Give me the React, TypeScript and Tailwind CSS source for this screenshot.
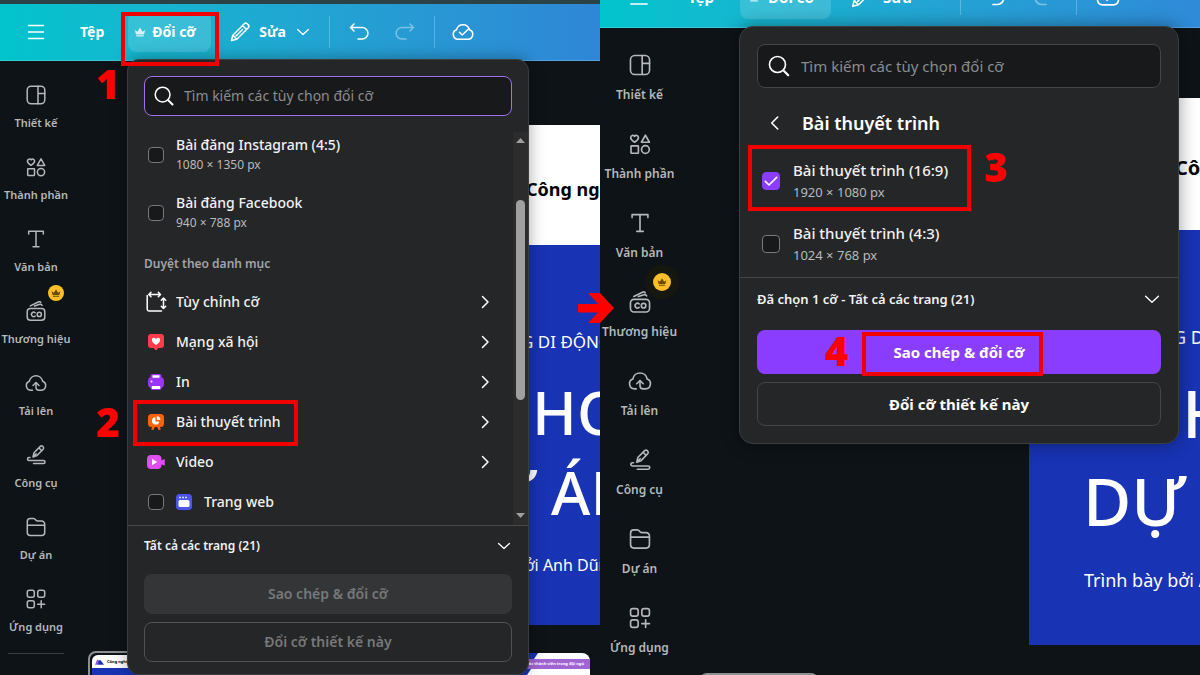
import type { ReactNode } from "react";

type Size = "sm" | "lg";

function Svg({ className, children, width = 1.5 }: { className: string; children: ReactNode; width?: number }) {
  return (
    <svg
      viewBox="0 0 24 24"
      className={className}
      fill="none"
      stroke="currentColor"
      strokeWidth={width}
      strokeLinecap="round"
      strokeLinejoin="round"
      aria-hidden="true"
    >
      {children}
    </svg>
  );
}

const CROWN = "M1.500 8l5.500 3.500L12 3l5 8.500L22.500 8 20 17H4zM4.500 18.500h15V21h-15z";

const navItems: { label: string; icon: ReactNode; pro?: boolean }[] = [
  {
    label: "Thiết kế",
    icon: (
      <>
        <rect x="3.2" y="3.2" width="17.600" height="17.600" rx="4" />
        <path d="M14 3.200v17.600M14 10.500h6.800" />
      </>
    ),
  },
  {
    label: "Thành phần",
    icon: (
      <>
        <path d="M7 10.400C4.600 8.900 3.400 7.600 3.400 6A2 2 0 0 1 7 4.900 2 2 0 0 1 10.600 6c0 1.600-1.200 2.900-3.600 4.400z" />
        <path d="M17 3.900l3.700 6.500h-7.400z" />
        <rect x="3.700" y="13.700" width="6.800" height="6.800" rx=".4" />
        <circle cx="17" cy="17.100" r="3.600" />
      </>
    ),
  },
  {
    label: "Văn bản",
    icon: <path d="M4.700 7V4.300h14.600V7M12 4.300v15.400M9 19.700h6" />,
  },
  {
    label: "Thương hiệu",
    pro: true,
    icon: (
      <>
        <rect x="3.200" y="9.600" width="17.600" height="11.600" rx="3.200" />
        <path d="M6.300 6.900l8.500-4.100c.9-.4 1.700 0 2 .7M10.500 7l5.200-1.700c1-.3 1.900.1 2.400 1.100" />
        <path d="M11.200 13.800a2.200 2.200 0 1 0 0 3.200" />
        <circle cx="15.300" cy="15.400" r="2.100" />
      </>
    ),
  },
  {
    label: "Tải lên",
    icon: (
      <>
        <path d="M8.500 19.300H7A4.700 4.700 0 0 1 5.400 10.200 6.700 6.700 0 0 1 18.600 10.200 4.700 4.700 0 0 1 17 19.300h-2c-2 0-3-1-3-3V12" />
        <path d="M9 14.500l3-3 3 3" />
      </>
    ),
  },
  {
    label: "Công cụ",
    icon: (
      <>
        <path d="M9 14l1-4.300 6.300-6.300a1.700 1.700 0 0 1 2.400 0l.4.400a1.700 1.700 0 0 1 0 2.400L13 12.600zM15 5l2.800 2.800M9 14l3.200-3.200" />
        <path d="M6 14.500H5a1.500 1.500 0 0 0 0 3h14.500a1.300 1.300 0 0 1 0 3H9.500" />
      </>
    ),
  },
  {
    label: "Dự án",
    icon: (
      <path d="M3.300 10.300h17.400M3.300 6.600a3 3 0 0 1 3-3h3.300c1.900 0 2 2.500 4 2.500h4.100a3 3 0 0 1 3 3v8.300a3 3 0 0 1-3 3H6.300a3 3 0 0 1-3-3z" />
    ),
  },
  {
    label: "Ứng dụng",
    icon: (
      <>
        <rect x="3.300" y="3.300" width="7" height="7" rx="2" />
        <rect x="13.700" y="3.300" width="7" height="7" rx="2" />
        <rect x="3.300" y="13.700" width="7" height="7" rx="2" />
        <path d="M17.200 13.700v7M13.700 17.200h7" />
      </>
    ),
  },
];

function Sidebar({ size }: { size: Size }) {
  const lg = size === "lg";
  return (
    <nav className={lg ? "w-[79px] shrink-0 pt-4" : "w-[72px] shrink-0 pt-[14px]"}>
      <ul>
        {navItems.map((item) => (
          <li key={item.label}>
            <button
              type="button"
              className={
                lg
                  ? "relative flex w-full flex-col items-center gap-2 pt-2 pb-[19px] text-[#b6b8ba]"
                  : "relative flex w-full flex-col items-center gap-2 pt-2 pb-4 text-[#b6b8ba]"
              }
            >
              <Svg className={lg ? "size-[26px]" : "size-6"}>{item.icon}</Svg>
              <span
                className={
                  lg
                    ? "text-[12px] leading-[18px] font-semibold whitespace-nowrap"
                    : "text-[11px] leading-4 font-semibold whitespace-nowrap"
                }
              >
                {item.label}
              </span>
              {item.pro && (
                <span
                  className={
                    lg
                      ? "absolute -top-2 right-2 grid size-[18px] place-items-center rounded-full bg-[#fbbe28] text-[#6b4a00] shadow-[0_0_0_8px_#16170f]"
                      : "absolute -top-[6px] right-2 grid size-4 place-items-center rounded-full bg-[#fbbe28] text-[#6b4a00]"
                  }
                >
                  <svg viewBox="0 0 24 24" className="size-[10px]" fill="currentColor" aria-hidden="true">
                    <path d={CROWN} />
                  </svg>
                </span>
              )}
            </button>
          </li>
        ))}
      </ul>
      {!lg && <hr className="mx-2 mt-[2px] border-[#3a3e42]" />}
    </nav>
  );
}

function Header({ size }: { size: Size }) {
  const lg = size === "lg";
  const text = lg ? "text-[15px] font-bold" : "text-[14px] font-bold";
  const icon = lg ? "size-[26px] shrink-0" : "size-6 shrink-0";
  return (
    <header
      className={
        lg
          ? "-mt-[34px] flex h-[62px] shrink-0 items-center border-b border-white/20 bg-linear-to-r from-[#00c4cc] to-[#2f8ad8] pl-[26px] text-white"
          : "flex h-[57px] shrink-0 items-center border-b border-white/20 bg-linear-to-r from-[#00c4cc] to-[#2f86d6] pl-6 text-white"
      }
    >
      <button type="button" aria-label="Menu">
        <Svg className={icon}>
          <path d="M4.500 5.500h15M4.500 12h15M4.500 18.500h15" />
        </Svg>
      </button>
      <button type="button" className={`${text} ${lg ? "ml-9" : "ml-8"}`}>
        Tệp
      </button>
      <button
        type="button"
        className={`${text} flex items-center rounded-lg bg-white/15 ${
          lg ? "ml-[26px] h-11 w-[91px] gap-2 pl-2" : "ml-6 h-10 w-[83px] gap-[6px] pl-[6px]"
        }`}
      >
        <svg viewBox="0 0 24 24" className="size-3 shrink-0 opacity-80" fill="currentColor" aria-hidden="true">
          <path d={CROWN} />
        </svg>
        Đổi cỡ
      </button>
      <button type="button" className={`${text} flex items-center ${lg ? "ml-[18px] gap-2" : "ml-[17px] gap-[7px]"}`}>
        <Svg className={icon}>
          <path d="M3.500 20.500l1.300-5.300L16.300 3.700a2 2 0 0 1 2.800 0l1.200 1.200a2 2 0 0 1 0 2.800L8.800 19.200zM14.500 5.500l4 4M5 15.500l3.500 3.500M8 16l6.500-6.500" />
        </Svg>
        Sửa
        <Svg className="size-5 shrink-0">
          <path d="M5.500 9l6.500 6 6.500-6" />
        </Svg>
      </button>
      <span className={`w-px bg-white/25 ${lg ? "ml-5 h-9" : "ml-4 h-8"}`} />
      <button type="button" aria-label="Hoàn tác" className={lg ? "ml-5" : "ml-[17px]"}>
        <Svg className={icon}>
          <path d="M7 4L3.500 7.500 7 11M3.500 7.500h11.700a5.700 5.700 0 0 1 0 11.400H11" />
        </Svg>
      </button>
      <button type="button" aria-label="Làm lại" disabled className={`opacity-40 ${lg ? "ml-[25px]" : "ml-[22px]"}`}>
        <Svg className={icon}>
          <path d="M17 4l3.500 3.500L17 11M20.500 7.500H8.800a5.700 5.700 0 0 0 0 11.400H13" />
        </Svg>
      </button>
      <span className={`w-px bg-white/25 ${lg ? "ml-[18px] h-9" : "ml-[17px] h-8"}`} />
      <button type="button" aria-label="Đã lưu" className={lg ? "ml-[18px]" : "ml-4"}>
        <Svg className={icon}>
          <path d="M7 19.300A4.900 4.900 0 0 1 5.500 9.800a6.700 6.700 0 0 1 13 0A4.900 4.900 0 0 1 17 19.300z" />
          <path d="M8.500 12.300l2.700 2.700 6.300-6" />
        </Svg>
      </button>
    </header>
  );
}

function Slide({ size }: { size: Size }) {
  const lg = size === "lg";
  return (
    <article className={lg ? "ml-[350px] whitespace-nowrap" : "ml-[318px] whitespace-nowrap"}>
      <div
        className={
          lg
            ? "flex h-[132px] items-center bg-white pt-2 pl-[146px] text-[20px] font-bold text-black"
            : "flex h-[120px] items-center bg-white pt-2 pl-[136px] text-[18px] font-bold text-black"
        }
      >
        Công nghệ
      </div>
      <div className={lg ? "h-[415px] bg-[#1833b4] pt-[93px] text-white" : "h-[380px] bg-[#1833b4] pt-[85px] text-white"}>
        <p className={lg ? "pl-[144px] text-[18px] leading-7" : "pl-[131px] text-[17px] leading-6"}>G DI ĐỘNG</p>
        <p
          className={
            lg
              ? "mt-[17px] pl-[153px] text-[66px] leading-[88px] font-medium"
              : "mt-[18px] pl-[142px] text-[60px] leading-[80px] font-medium"
          }
        >
          HOA
        </p>
        <p
          className={
            lg ? "pl-[54px] text-[66px] leading-[88px] font-medium" : "pl-[53px] text-[60px] leading-[80px] font-medium"
          }
        >
          DỰ ÁN
        </p>
        <p className={lg ? "mt-[22px] pl-[55px] text-[18px] leading-7" : "mt-[21px] pl-[51px] text-[16px] leading-6"}>
          Trình bày bởi Anh Dũng
        </p>
      </div>
    </article>
  );
}

function Thumbnails() {
  return (
    <div className="mt-[26px] flex items-start justify-between pr-[10px] pl-4">
      <div className="h-[60px] w-[107px] rounded-lg border-2 border-[#8d9092] p-[2px]">
        <div className="h-full overflow-hidden rounded-md bg-[#1833b4]">
          <div className="flex h-[13px] items-center gap-[3px] bg-white pl-[3px] text-[4px] font-bold text-black">
            <svg viewBox="0 0 16 10" className="h-[6px] w-[9px]" aria-hidden="true">
              <path d="M0 10L4 0l4 6-1 4z" fill="#8b5bd6" />
              <path d="M6 10V2l4 0 6 8z" fill="#1833b4" />
            </svg>
            Công nghệ
          </div>
        </div>
      </div>
      <div className="mt-[2px] h-[60px] w-[107px] overflow-hidden rounded-lg bg-white">
        <div className="flex h-[6px] pl-[42px]">
          <svg viewBox="0 0 16 6" className="h-[6px] w-4" aria-hidden="true">
            <path d="M0 0h13L9 6H0z" fill="#1833b4" />
          </svg>
        </div>
        <p className="flex h-[10px] items-center justify-end bg-[#a065d2] pr-[6px] text-[4px] font-bold whitespace-nowrap text-white">
          Các thành viên trong đội ngũ
        </p>
        <svg viewBox="0 0 48 12" className="h-3 w-12" aria-hidden="true">
          <path d="M0 0h48l-8 12H0z" fill="#1833b4" />
        </svg>
      </div>
    </div>
  );
}

function SearchBox({ size, focused }: { size: Size; focused?: boolean }) {
  const lg = size === "lg";
  return (
    <label
      className={`flex items-center rounded-lg border bg-[#18191b] ${
        focused ? "border-[#a070ee]" : "border-[#434547]"
      } ${lg ? "mx-[17px] h-11 gap-[9px] px-2" : "mx-4 h-10 gap-2 px-[7px]"}`}
    >
      <Svg className={lg ? "size-[26px] shrink-0 text-white" : "size-6 shrink-0 text-white"}>
        <circle cx="10.600" cy="10.600" r="7.400" />
        <path d="M16.200 16.200l4.300 4.300" strokeWidth="2" />
      </Svg>
      <input
        type="search"
        aria-label="Tìm kiếm các tùy chọn đổi cỡ"
        placeholder="Tìm kiếm các tùy chọn đổi cỡ"
        className={`h-5 min-w-0 flex-1 bg-transparent text-white outline-none placeholder:text-[#8b8c8e] ${
          lg ? "text-[15px]" : "text-[14px]"
        }`}
      />
    </label>
  );
}

function Checkbox({ id, size, checked }: { id: string; size: Size; checked?: boolean }) {
  return (
    <span className={`grid shrink-0 place-items-center ${size === "lg" ? "w-[26px]" : "w-6"}`}>
      <input
        id={id}
        type="checkbox"
        defaultChecked={checked}
        className={`peer col-start-1 row-start-1 appearance-none rounded-[4px] border border-[#77797c] bg-[#18191b] checked:border-[#8b3dff] checked:bg-[#8b3dff] ${
          size === "lg" ? "size-[18px]" : "size-4"
        }`}
      />
      <Svg
        className="pointer-events-none col-start-1 row-start-1 hidden size-4 text-white peer-checked:block"
        width={2.4}
      >
        <path d="M3.500 12.500l5.500 5.500L20.500 6.500" />
      </Svg>
    </span>
  );
}

function FormatOption({
  id,
  size,
  title,
  dims,
  checked,
}: {
  id: string;
  size: Size;
  title: string;
  dims: string;
  checked?: boolean;
}) {
  const lg = size === "lg";
  return (
    <div className={lg ? "flex items-center gap-[9px]" : "flex items-center gap-2"}>
      <Checkbox id={id} size={size} checked={checked} />
      <label htmlFor={id} className="flex flex-col">
        <span
          className={
            lg
              ? "text-[15px] leading-[22px] font-medium text-[#f2f2f3]"
              : "text-[14px] leading-5 font-medium text-[#f2f2f3]"
          }
        >
          {title}
        </span>
        <span className={lg ? "text-[13px] leading-[22px] text-[#b9babc]" : "text-[12px] leading-5 text-[#b9babc]"}>
          {dims}
        </span>
      </label>
    </div>
  );
}

function WebIcon() {
  return (
    <svg viewBox="0 0 16 16" className="size-4 shrink-0" aria-hidden="true">
      <rect width="16" height="16" rx="3.500" fill="#4b55ea" />
      <path d="M3.200 2.700h1.600v1.600H3.200zM6.200 2.700h1.600v1.600H6.200zM9.200 2.700h1.600v1.600H9.200z" fill="#fff" />
      <rect x="2.500" y="6" width="11" height="7" rx="1.500" fill="#fff" />
    </svg>
  );
}

const categories: { label: string; icon: ReactNode }[] = [
  {
    label: "Tùy chỉnh cỡ",
    icon: (
      <g fill="none" stroke="#fff" strokeWidth="1.500" strokeLinecap="round" strokeLinejoin="round">
        <path d="M3.200 5.500V19a2 2 0 0 0 2 2h12.300" />
        <path d="M5 4.500h11M7 2.300L4.800 4.500 7 6.700M14.300 2.300l2.200 2.200-2.200 2.200" />
        <path d="M19.500 8v10.500M17.300 10.200L19.500 8l2.200 2.200M17.300 16.300l2.200 2.200 2.200-2.200" />
      </g>
    ),
  },
  {
    label: "Mạng xã hội",
    icon: (
      <>
        <path
          d="M7 4h10a3 3 0 0 1 3 3v8a3 3 0 0 1-3 3h-2.500L12 20.500 9.500 18H7a3 3 0 0 1-3-3V7a3 3 0 0 1 3-3z"
          fill="#ff3b4b"
        />
        <path d="M12 15c-2.700-1.700-4-3.100-4-4.700a2 2 0 0 1 4-.9 2 2 0 0 1 4 .9c0 1.600-1.300 3-4 4.700z" fill="#fff" />
      </>
    ),
  },
  {
    label: "In",
    icon: (
      <>
        <rect x="6.500" y="4" width="11" height="6" rx="2" fill="#9b35f5" />
        <rect x="4" y="7" width="16" height="11" rx="4" fill="#9b35f5" />
        <rect x="6.500" y="14" width="11" height="6" rx="2" fill="#9b35f5" />
        <path d="M8.500 5.200h7v2.600h-7zM7.800 16h8.400v3H7.800z" fill="#fff" />
        <circle cx="7.500" cy="11.500" r="1" fill="#fff" />
      </>
    ),
  },
  {
    label: "Bài thuyết trình",
    icon: (
      <>
        <rect x="4" y="4" width="16" height="13" rx="3.500" fill="#ff6105" />
        <path d="M10.500 15l-2.300 4.800M13.500 15l2.300 4.800" stroke="#ff6105" strokeWidth="2.400" />
        <path d="M11.400 7.200a3.700 3.700 0 1 0 3.900 4.300h-3.900z" fill="#fff" />
        <path d="M12.800 6.300v3.800h3.600a3.800 3.800 0 0 0-3.600-3.800z" fill="#fff" />
      </>
    ),
  },
  {
    label: "Video",
    icon: (
      <>
        <rect x="3" y="5" width="14.500" height="14" rx="4" fill="#e04df0" />
        <path d="M16 11l4.800-2v6.500L16 14z" fill="#e04df0" />
        <path d="M8 8.800v6.400l5.200-3.200z" fill="#fff" />
      </>
    ),
  },
];

function ScrollTrack() {
  return (
    <div className="flex w-[15px] shrink-0 flex-col items-center bg-[#2c2c2c]" aria-hidden="true">
      <svg viewBox="0 0 9 5" className="mt-[6px] h-[5px] w-[9px]" fill="#a0a0a0">
        <path d="M4.500 0L9 5H0z" />
      </svg>
      <span className="mt-[57px] h-[200px] w-[9px] rounded-full bg-[#a0a0a0]" />
      <svg viewBox="0 0 9 5" className="mt-auto mb-[7px] h-[5px] w-[9px]" fill="#a0a0a0">
        <path d="M4.500 5L0 0h9z" />
      </svg>
    </div>
  );
}

function ResizeMenu() {
  return (
    <section className="absolute top-[59px] left-[127px] w-[402px] rounded-xl border border-[#3b3d3f] bg-[#252627] pt-4 pb-3 shadow-[0_0_16px_rgba(0,0,0,0.35)]">
      <SearchBox size="sm" focused />
      <div className="mt-4 flex border-b border-[#47494b]">
        <div className="flex-1 pt-[3px] pr-4 pb-[3px] pl-4">
          <div className="flex flex-col gap-[18px]">
            <FormatOption id="ig" size="sm" title="Bài đăng Instagram (4:5)" dims="1080 × 1350 px" />
            <FormatOption id="fb" size="sm" title="Bài đăng Facebook" dims="940 × 788 px" />
          </div>
          <h3 className="mt-[21px] mb-2 text-[12px] leading-5 font-semibold text-[#a3a4a6]">Duyệt theo danh mục</h3>
          {categories.map((c) => (
            <button
              key={c.label}
              type="button"
              className="flex h-10 w-full items-center gap-2 text-left text-[14px] font-medium text-[#f2f2f3]"
            >
              <svg viewBox="0 0 24 24" className="size-6 shrink-0" aria-hidden="true">
                {c.icon}
              </svg>
              <span className="flex-1">{c.label}</span>
              <Svg className="size-6 shrink-0 text-white">
                <path d="M9.500 6.500L15 12l-5.500 5.500" />
              </Svg>
            </button>
          ))}
          <div className="flex h-10 items-center gap-2">
            <Checkbox id="web" size="sm" />
            <label htmlFor="web" className="flex items-center gap-3 text-[14px] font-medium text-[#f2f2f3]">
              <WebIcon />
              Trang web
            </label>
          </div>
        </div>
        <ScrollTrack />
      </div>
      <div className="px-4 pt-[10px]">
        <button
          type="button"
          className="flex w-full items-center justify-between text-[12px] font-semibold text-[#f2f2f3]"
        >
          Tất cả các trang (21)
          <Svg className="-mr-1 h-5 w-6 text-white">
            <path d="M5.500 9l6.500 6 6.500-6" />
          </Svg>
        </button>
        <div className="mt-[18px] flex flex-col gap-2 text-[14px] font-semibold text-[#77787a]">
          <button type="button" disabled className="h-10 rounded-lg bg-[#343537]">
            Sao chép & đổi cỡ
          </button>
          <button type="button" disabled className="h-10 rounded-lg border border-[#505254]">
            Đổi cỡ thiết kế này
          </button>
        </div>
      </div>
    </section>
  );
}

function PresentationMenu() {
  return (
    <section className="absolute top-[26px] left-[139px] w-[440px] rounded-[14px] border border-[#3b3d3f] bg-[#252627] pt-[17px] pb-[17px] shadow-[0_0_18px_rgba(0,0,0,0.4)]">
      <SearchBox size="lg" />
      <div className="mt-[22px] flex items-center gap-[14px] pl-[22px] text-white">
        <button type="button" aria-label="Quay lại">
          <Svg className="size-[26px]">
            <path d="M14.500 6.500L9 12l5.500 5.500" />
          </Svg>
        </button>
        <h2 className="text-[18px] leading-6 font-semibold">Bài thuyết trình</h2>
      </div>
      <div className="mt-[23px] flex flex-col gap-[19px] border-b border-[#434547] pb-[11px] pl-[18px]">
        <FormatOption id="p169" size="lg" title="Bài thuyết trình (16:9)" dims="1920 × 1080 px" checked />
        <FormatOption id="p43" size="lg" title="Bài thuyết trình (4:3)" dims="1024 × 768 px" />
      </div>
      <div className="px-[17px] pt-[10px]">
        <button
          type="button"
          className="flex w-full items-center justify-between text-[13px] leading-[22px] font-semibold text-[#f2f2f3]"
        >
          Đã chọn 1 cỡ - Tất cả các trang (21)
          <Svg className="-mr-1 h-[22px] w-[26px] text-white">
            <path d="M5 9l7 6.500L19 9" />
          </Svg>
        </button>
        <div className="mt-5 flex flex-col gap-2 text-[15px] font-bold text-white">
          <button type="button" className="h-11 rounded-lg bg-[#8b3dff]">
            Sao chép & đổi cỡ
          </button>
          <button type="button" className="h-11 rounded-lg border border-[#434547]">
            Đổi cỡ thiết kế này
          </button>
        </div>
      </div>
    </section>
  );
}

function Callouts() {
  const box = "absolute border-4 border-[#f00000]";
  const num = "absolute text-[40px] leading-10 font-black text-[#ff0000]";
  return (
    <div className="pointer-events-none absolute inset-0">
      <div className={`${box} top-3 left-[121px] h-[54px] w-[98px]`} />
      <div className={`${box} top-[400px] left-[133px] h-[46px] w-[165px]`} />
      <div className={`${box} top-[145px] left-[748px] h-[66px] w-[223px]`} />
      <div className={`${box} top-[332px] left-[862px] h-[44px] w-[181px]`} />
      <span className={`${num} top-16 left-24`}>1</span>
      <span className={`${num} top-[402px] left-24`}>2</span>
      <span className={`${num} top-[147px] left-[984px]`}>3</span>
      <span className={`${num} top-[331px] left-[825px]`}>4</span>
      <svg
        viewBox="0 0 36 30"
        className="absolute top-[293px] left-[578px] h-[30px] w-9"
        fill="#ff0000"
        aria-hidden="true"
      >
        <path d="M0 11h20L10 0h12l14 15-14 15H10l10-10.500H0z" />
      </svg>
    </div>
  );
}

export default function App() {
  return (
    <main className="relative grid h-screen grid-cols-2 overflow-hidden bg-[#0e1317] font-['Noto_Sans',sans-serif] leading-5">
      <div className="relative flex min-w-0 flex-col overflow-hidden">
        <div className="h-1 shrink-0 bg-[#2b4247]" />
        <Header size="sm" />
        <div className="flex">
          <Sidebar size="sm" />
          <div className="min-w-0 flex-1 overflow-hidden pt-16">
            <Slide size="sm" />
            <Thumbnails />
          </div>
        </div>
        <ResizeMenu />
      </div>
      <div className="relative flex min-w-0 flex-col overflow-hidden">
        <Header size="lg" />
        <div className="flex">
          <Sidebar size="lg" />
          <div className="min-w-0 flex-1 overflow-hidden pt-[70px]">
            <Slide size="lg" />
            <div className="mt-7 ml-5 h-16 w-[120px] rounded-lg border-2 border-[#8d9092]" />
          </div>
        </div>
        <PresentationMenu />
      </div>
      <Callouts />
    </main>
  );
}
